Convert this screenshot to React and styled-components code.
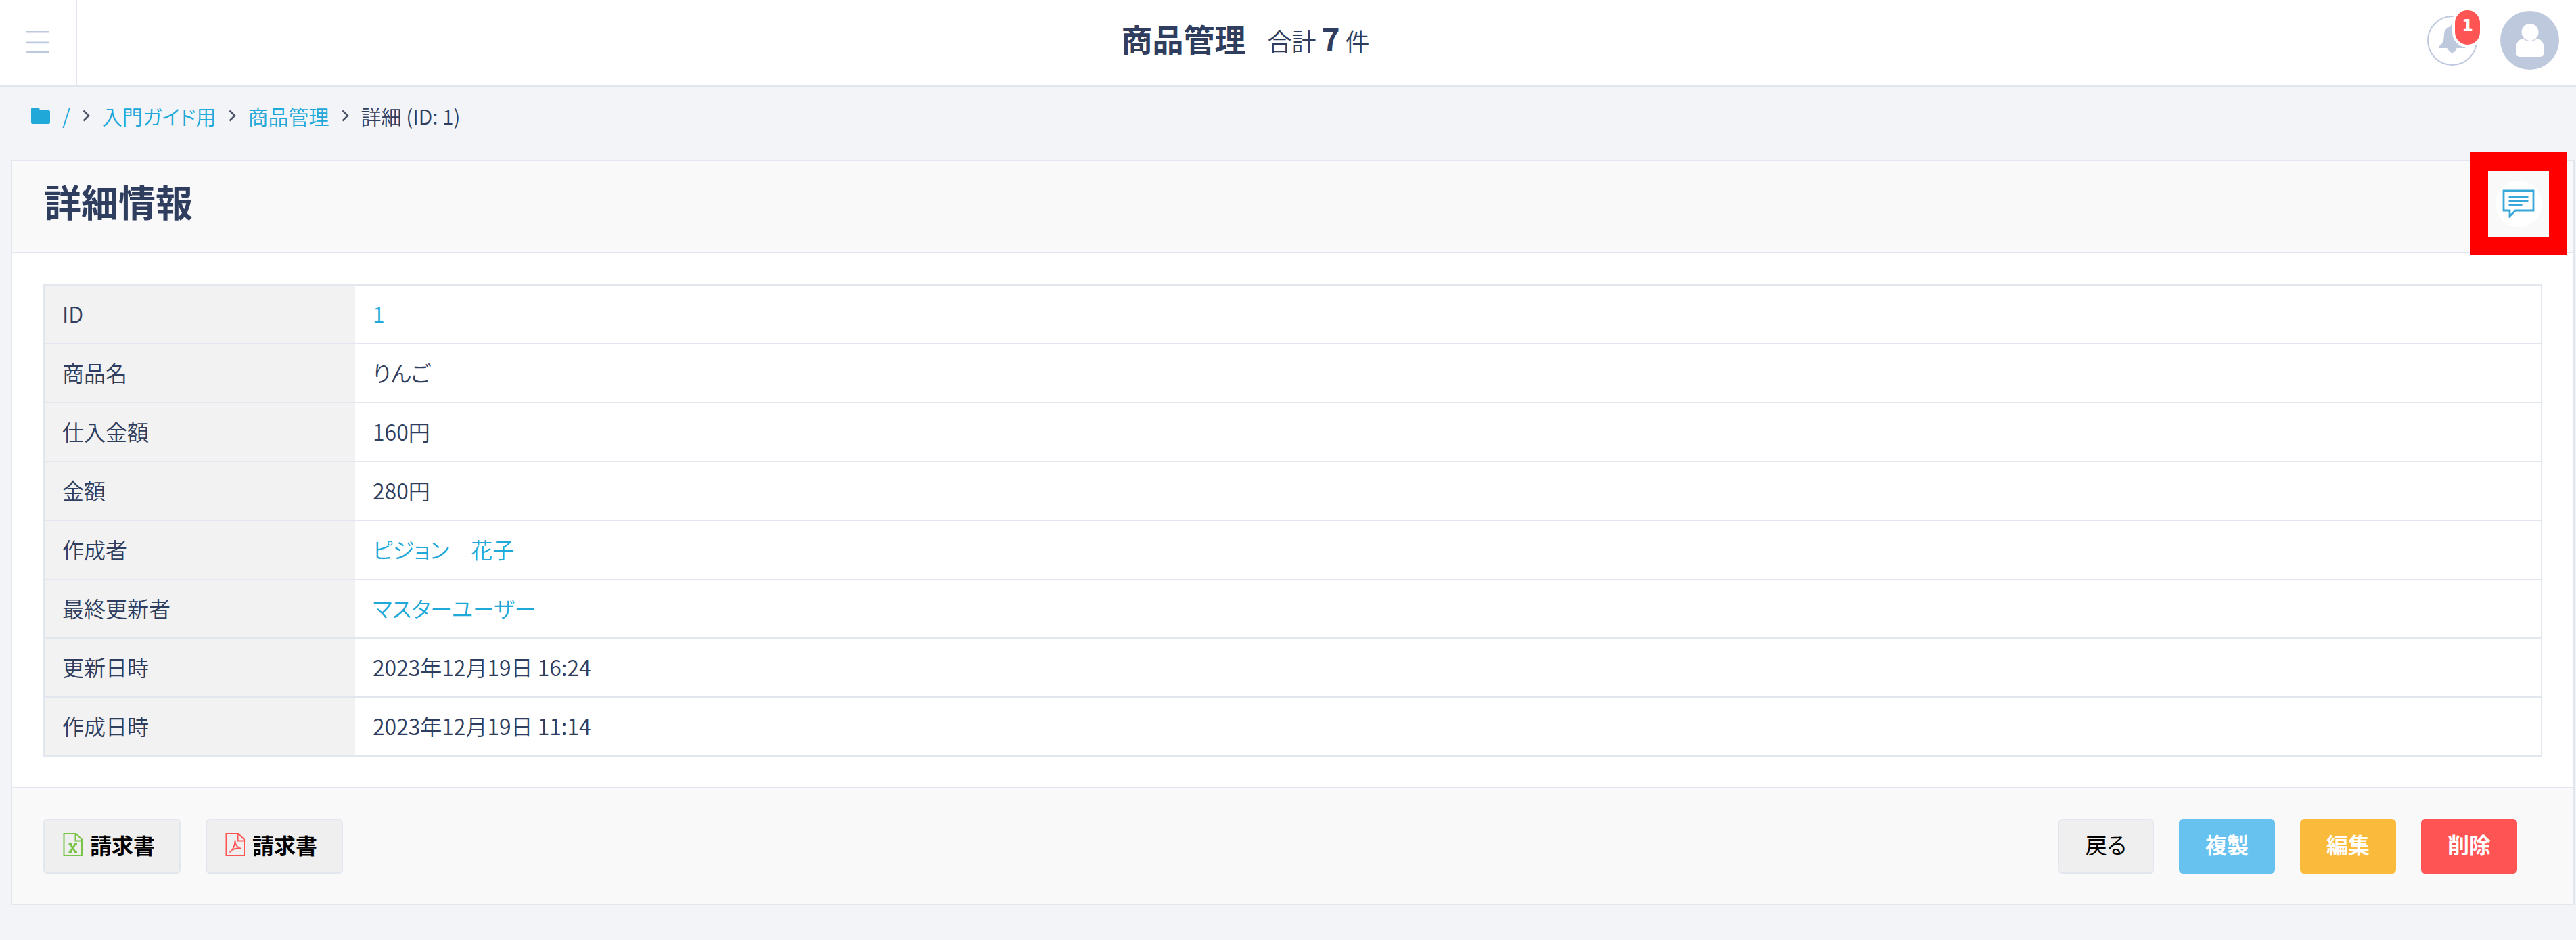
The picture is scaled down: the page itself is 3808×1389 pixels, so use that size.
import React from "react";
import styled, { createGlobalStyle } from "styled-components";

const rows = [
  { label: "ID", value: "1", link: true },
  { label: "商品名", value: "りんご" },
  { label: "仕入金額", value: "160円" },
  { label: "金額", value: "280円" },
  { label: "作成者", value: "ピジョン　花子", link: true },
  { label: "最終更新者", value: "マスターユーザー", link: true },
  { label: "更新日時", value: "2023年12月19日 16:24" },
  { label: "作成日時", value: "2023年12月19日 11:14" },
];

const actions = [
  { label: "戻る" },
  { label: "複製", color: "#67c2ef" },
  { label: "編集", color: "#fabb3d" },
  { label: "削除", color: "#ff5454" },
];

const MenuIcon = () => (
  <svg width="36" height="36" viewBox="0 0 36 36" fill="#bfc9de">
    <path d="M1 2h34v2.6H1zM1 17.6h34v2.6H1zM1 31.4h34v2.6H1z" />
  </svg>
);

const FolderIcon = () => (
  <svg width="28" height="24" viewBox="0 0 28 24" fill="#20a8d8">
    <path d="M2.5 0h8q2 0 2 2v1.8h13q2.5 0 2.5 2.5v15.2q0 2.5-2.5 2.5h-23q-2.5 0-2.5-2.5v-19q0-2.5 2.5-2.5z" />
  </svg>
);

const Chevron = () => (
  <svg width="11" height="18" viewBox="0 0 11 18" fill="none" stroke="#4a5568" strokeWidth="2.6">
    <path d="M1.5 1.5 9 9l-7.5 7.5" />
  </svg>
);

const BellIcon = () => (
  <svg width="40" height="44" viewBox="0 0 40 44" fill="#bfc9de">
    <path d="M20 0c1.5 0 2.5 1 2.5 3 6 1.5 9 6 9.5 12 .5 9 1.5 12 7 17v3H26.500c-.5 4-3.500 7-6.500 7s-6-3-6.500-7H1v-3c5.500-5 6.500-8 7-17 .5-6 3.500-10.500 9.500-12 0-2 1-3 2.500-3z" />
  </svg>
);

const UserIcon = () => (
  <svg width="42" height="50" viewBox="0 0 42 50" fill="#fff">
    <circle cx="21" cy="12.5" r="12.5" />
    <path d="M10.5 21.5c3 3 6.500 4.500 10.500 4.500s7.500-1.500 10.500-4.500c7 2 10.500 8 10.500 16.500v4c0 5-2.500 7-7 7H7c-4.500 0-7-2-7-7v-4c0-8.500 3.500-14.500 10.500-16.500z" />
  </svg>
);

const CommentIcon = () => (
  <svg width="48" height="42" viewBox="0 0 48 42" fill="none" stroke="#39a8d8">
    <path strokeWidth="2.8" d="M2 2h44v29H19.5L11 39.5V31H2z" />
    <path strokeWidth="3" d="M9.5 11h29M9.5 17h29M9.5 22.5h20" />
  </svg>
);

const ExcelIcon = () => (
  <svg width="30" height="34" viewBox="0 0 30 34" fill="none" stroke="#79c447" strokeWidth="2">
    <path d="M1.5 1h18l8.5 8.5V33H1.500zM18.500 1v10.500H28" />
    <path strokeWidth="2.8" d="M10.5 16l8 12M18.5 16l-8 12" />
    <path d="M8.5 16h5M16 16h5M8.5 28h5M16 28h5" />
  </svg>
);

const PdfIcon = () => (
  <svg width="30" height="34" viewBox="0 0 30 34" fill="none" stroke="#ff5454" strokeWidth="2">
    <path d="M1.5 1h18l8.5 8.5V33H1.500zM18.500 1v10.500H28" />
    <path strokeWidth="1.8" d="M6.5 28.5c4-2.5 8-9 8-18 0 6.500 3 11 9.500 12.500-5-1-9.500-.5-13 1.500" />
  </svg>
);

const App = () => {
  return (
    <Page>
      <GlobalStyle />
      <Header>
        <MenuButton type="button" aria-label="メニュー">
          <MenuIcon />
        </MenuButton>
        <HeaderTitle>
          <h1>商品管理</h1>
          <p>
            合計 <strong>7</strong> 件
          </p>
        </HeaderTitle>
        <HeaderTools>
          <BellButton type="button" aria-label="通知">
            <BellIcon />
            <Badge>1</Badge>
          </BellButton>
          <AvatarButton type="button" aria-label="ユーザー">
            <UserIcon />
          </AvatarButton>
        </HeaderTools>
      </Header>

      <Breadcrumb aria-label="パンくず">
        <a href="#root">
          <FolderIcon />
          <span>/</span>
        </a>
        <Chevron />
        <a href="#guide">入門ガイド用</a>
        <Chevron />
        <a href="#items">商品管理</a>
        <Chevron />
        <span>詳細 (ID: 1)</span>
      </Breadcrumb>

      <Card>
        <CardHeader>
          <h2>詳細情報</h2>
          <Highlight>
            <CommentButton type="button" aria-label="コメント">
              <CommentIcon />
            </CommentButton>
          </Highlight>
        </CardHeader>
        <CardBody>
          <DetailTable>
            <tbody>
              {rows.map((row) => (
                <tr key={row.label}>
                  <th scope="row">{row.label}</th>
                  <td>{row.link ? <a href="#detail">{row.value}</a> : row.value}</td>
                </tr>
              ))}
            </tbody>
          </DetailTable>
        </CardBody>
        <CardFooter>
          <ButtonGroup>
            <FileButton type="button">
              <ExcelIcon />
              請求書
            </FileButton>
            <FileButton type="button">
              <PdfIcon />
              請求書
            </FileButton>
          </ButtonGroup>
          <ButtonGroup>
            {actions.map((action) => (
              <ActionButton key={action.label} type="button" $color={action.color}>
                {action.label}
              </ActionButton>
            ))}
          </ButtonGroup>
        </CardFooter>
      </Card>
    </Page>
  );
};

const GlobalStyle = createGlobalStyle`
  * {
    box-sizing: border-box;
  }
  body {
    margin: 0;
    background: #f2f4f8;
    color: #2f3d5e;
    font-family: "Noto Sans CJK JP", sans-serif;
    font-size: 32px;
    line-height: 40px;
    font-weight: 350;
    font-feature-settings: "palt";
  }
  h1, h2, p {
    margin: 0;
  }
  a {
    color: #20a8d8;
    text-decoration: none;
  }
  svg {
    display: block;
    flex: none;
  }
  button {
    padding: 0;
    font: inherit;
    font-feature-settings: inherit;
    cursor: pointer;
  }
`;

const Page = styled.div`
  min-height: 100vh;
`;

const Header = styled.header`
  display: flex;
  align-items: stretch;
  height: 128px;
  background: #fff;
  border-bottom: 2px solid #e1e6ef;
`;

const MenuButton = styled.button`
  display: flex;
  align-items: center;
  justify-content: center;
  width: 114px;
  padding-bottom: 2px;
  background: none;
  border: none;
  border-right: 2px solid #e1e6ef;
`;

const HeaderTitle = styled.div`
  flex: 1;
  display: flex;
  align-items: baseline;
  justify-content: center;
  gap: 32px;
  padding-top: 32px;
  h1 {
    font-size: 46px;
    line-height: 48px;
    font-weight: 700;
  }
  p {
    font-size: 36px;
    line-height: 48px;
  }
  strong {
    font-size: 46px;
    font-weight: 700;
  }
`;

const HeaderTools = styled.div`
  display: flex;
  align-items: flex-start;
  gap: 34px;
  padding: 16px 25px 0 20px;
`;

const BellButton = styled.button`
  position: relative;
  display: flex;
  align-items: center;
  justify-content: center;
  width: 74px;
  height: 74px;
  margin-top: 7px;
  padding-bottom: 4px;
  background: #fff;
  border: 2px solid #bfc9de;
  border-radius: 50%;
`;

const Badge = styled.span`
  position: absolute;
  top: -14px;
  right: -10px;
  width: 45px;
  height: 59px;
  color: #fff;
  background: #ff5454;
  border: 4px solid #fff;
  border-radius: 24px;
  font-family: "DejaVu Sans", sans-serif;
  font-size: 24px;
  line-height: 47px;
  font-weight: 700;
  text-align: center;
`;

const AvatarButton = styled.button`
  display: flex;
  align-items: center;
  justify-content: center;
  width: 87px;
  height: 87px;
  background: #bfc9de;
  border: none;
  border-radius: 50%;
`;

const Breadcrumb = styled.nav`
  display: flex;
  align-items: center;
  gap: 18px;
  height: 108px;
  padding: 0 46px 22px;
  font-size: 30px;
  a {
    display: flex;
    align-items: center;
    gap: 18px;
  }
`;

const Card = styled.section`
  margin: 0 2px 0 16px;
  background: #fff;
  border: 2px solid #e1e6ef;
`;

const CardHeader = styled.div`
  display: flex;
  align-items: center;
  justify-content: space-between;
  height: 136px;
  padding: 0 9px 8px 47px;
  background: #f9f9f9;
  border-bottom: 2px solid #e1e6ef;
  h2 {
    padding-bottom: 10px;
    font-size: 55px;
    line-height: 60px;
    font-weight: 700;
  }
`;

const Highlight = styled.div`
  display: flex;
  align-items: center;
  justify-content: center;
  width: 144px;
  height: 152px;
  margin: -12px 0;
  background: #f9f9f9;
  border: 27px solid #f00;
`;

const CommentButton = styled.button`
  display: flex;
  align-items: center;
  justify-content: center;
  width: 69px;
  height: 69px;
  background: #fff;
  border: none;
  border-radius: 50%;
`;

const CardBody = styled.div`
  padding: 46px 46px 45px;
`;

const DetailTable = styled.table`
  width: 100%;
  border: 2px solid #e1e6ef;
  border-collapse: collapse;
  table-layout: fixed;
  tr {
    border-bottom: 2px solid #e1e6ef;
  }
  th,
  td {
    height: 87px;
    padding: 0 26px 4px;
    font-weight: 350;
    text-align: left;
  }
  th {
    width: 460px;
    background: #f2f2f2;
  }
`;

const CardFooter = styled.div`
  display: flex;
  justify-content: space-between;
  padding: 45px 83px 45px 46px;
  background: #f9f9f9;
  border-top: 2px solid #e1e6ef;
`;

const ButtonGroup = styled.div`
  display: flex;
  gap: 37px;
`;

const FileButton = styled.button`
  display: flex;
  align-items: center;
  gap: 10px;
  height: 81px;
  padding: 0 36px 6px 27px;
  color: #000;
  background: #efefef;
  border: 2px solid #e1e6ef;
  border-radius: 6px;
  font-weight: 700;
`;

const ActionButton = styled.button`
  width: 142px;
  height: 81px;
  padding-bottom: 8px;
  color: ${(props) => (props.$color ? "#fff" : "#000")};
  background: ${(props) => props.$color || "#efefef"};
  border: 2px solid ${(props) => props.$color || "#e1e6ef"};
  border-radius: 6px;
  font-weight: ${(props) => (props.$color ? 700 : 400)};
`;

export default App;
